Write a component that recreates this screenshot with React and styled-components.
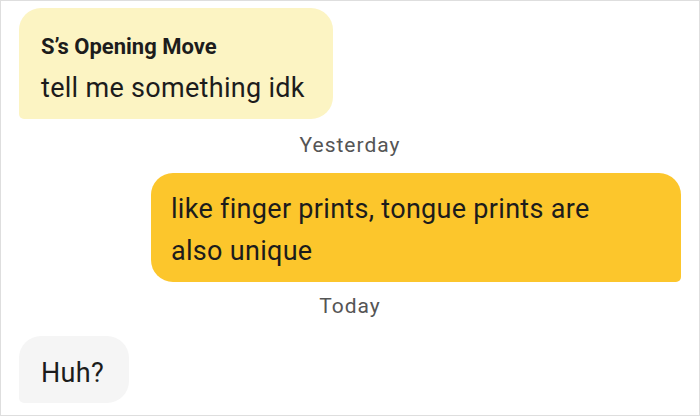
import styled, { createGlobalStyle } from 'styled-components'

const GlobalStyle = createGlobalStyle`
    html, body {
        margin: 0;
        padding: 0;
        background: #ffffff;
    }
    * {
        box-sizing: border-box;
    }
`

const Screen = styled.main`
    width: 700px;
    height: 416px;
    border: 1px solid #dedede;
    background: #ffffff;
    display: flex;
    flex-direction: column;
    padding: 7px 18px 0 18px;
    font-family: Roboto, "Noto Sans", sans-serif;
    color: #1c1c1c;
    overflow: hidden;
`

const Bubble = styled.div`
    align-self: ${(props) => (props.mine ? 'flex-end' : 'flex-start')};
    background: ${(props) => props.bg};
    border-radius: ${(props) =>
        props.mine ? '22px 22px 5px 22px' : '22px 22px 22px 5px'};
    padding: ${(props) => props.pad || '14px 22px'};
    width: ${(props) => props.width || 'auto'};
    height: ${(props) => props.height || 'auto'};
`

const Sender = styled.div`
    font-size: 22px;
    font-weight: 700;
    line-height: 24px;
    margin-bottom: 9px;
`

const Message = styled.div`
    font-size: 27px;
    letter-spacing: 0.3px;
    line-height: ${(props) => props.lh || '40px'};
    font-weight: 400;
    max-width: ${(props) => props.maxWidth || 'none'};
`

const Stamp = styled.div`
    align-self: center;
    font-size: 21px;
    letter-spacing: 1px;
    color: #555555;
    line-height: 24px;
    margin: ${(props) => props.margin};
`

export default function App() {
    return (
        <>
            <GlobalStyle />
            <Screen>
                <Bubble bg="#fcf4c3" width="314px" height="111px" pad="27px 22px 0 22px">
                    <Sender>S’s Opening Move</Sender>
                    <Message>tell me something idk</Message>
                </Bubble>
                <Stamp margin="14px 0 16px 0">Yesterday</Stamp>
                <Bubble mine bg="#fcc62c" width="530px" height="109px" pad="15px 20px 0 20px">
                    <Message lh="42px" maxWidth="430px">
                        like finger prints, tongue prints are also unique
                    </Message>
                </Bubble>
                <Stamp margin="12px 0 18px 0">Today</Stamp>
                <Bubble bg="#f5f5f5" width="110px" height="67px" pad="17px 22px 0 22px">
                    <Message>Huh?</Message>
                </Bubble>
            </Screen>
        </>
    )
}
